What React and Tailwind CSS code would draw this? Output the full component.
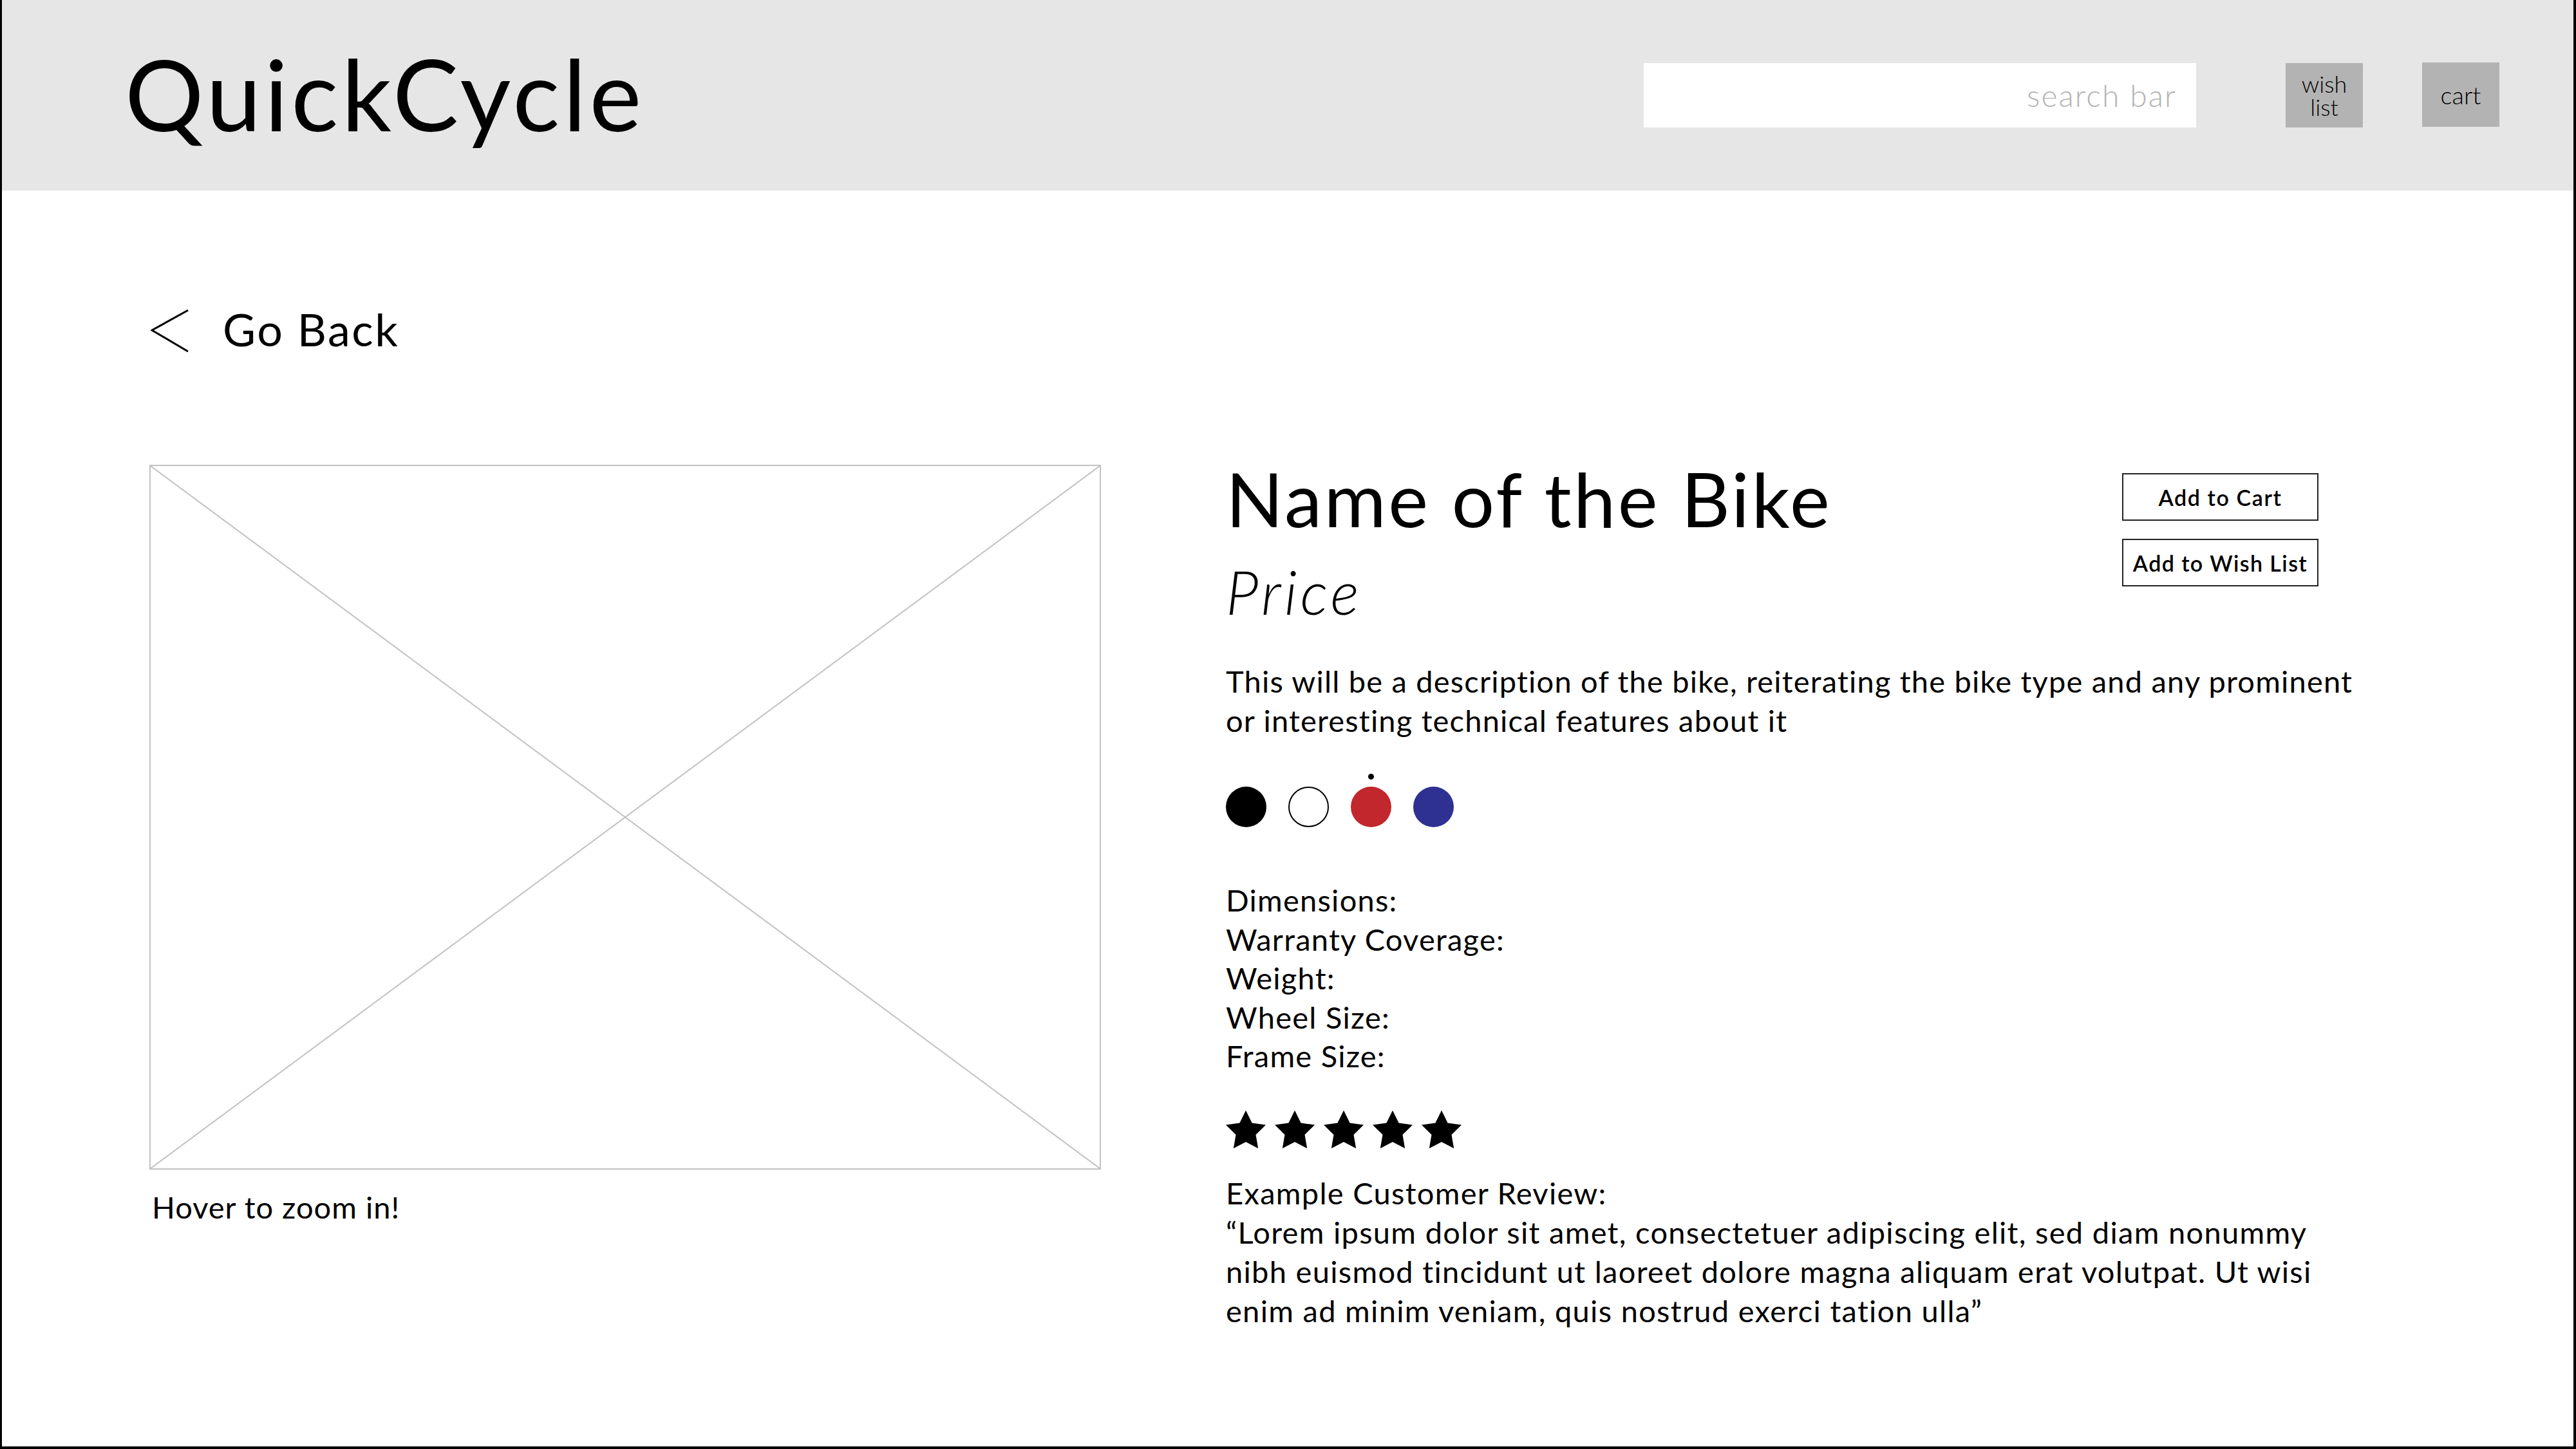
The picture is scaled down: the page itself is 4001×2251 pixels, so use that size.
import React from "react";

function Star() {
  return (
    <svg width="62" height="59" viewBox="2 2 20 19.02" className="block">
      <polygon
        points="12,2 15.09,8.26 22,9.27 17,14.14 18.18,21.02 12,17.77 5.82,21.02 7,14.14 2,9.27 8.91,8.26"
        fill="#000"
      />
    </svg>
  );
}

export default function App() {
  return (
    <div className="w-[4001px] h-[2251px] bg-white border-l-[3px] border-r-[4px] border-b-[4px] border-black flex flex-col font-['Lato',sans-serif] text-black overflow-hidden">
      {/* Header */}
      <header className="h-[296px] shrink-0 bg-[#e6e6e6] flex items-start justify-between pl-[191px] pr-[115px]">
        <div className="mt-[69px] text-[153px] leading-none font-normal tracking-[5px]">QuickCycle</div>
        <div className="mt-[97px] flex items-start">
          <div className="mt-[1px] w-[858px] h-[100px] bg-white flex items-center justify-end pr-[30px] text-[48px] font-light tracking-[2px] text-[#b3b3b3]">
            search bar
          </div>
          <div className="mt-[1px] ml-[139px] w-[120px] h-[100px] bg-[#b3b3b3] flex flex-col items-center justify-center text-[36px] leading-[36px] font-light">
            <span>wish</span>
            <span>list</span>
          </div>
          <div className="ml-[92px] w-[120px] h-[100px] bg-[#b3b3b3] flex items-center justify-center text-[38px] leading-none font-light">
            cart
          </div>
        </div>
      </header>

      {/* Main */}
      <main className="flex-1 pl-[229px] pt-[180px]">
        <div className="flex items-center h-[70px]">
          <svg width="60" height="66" viewBox="0 0 60 66" className="ml-[2px] mt-[6px]">
            <polyline points="58,1 2,32 58,65" fill="none" stroke="#000" strokeWidth="3" />
          </svg>
          <span className="ml-[52px] text-[70px] leading-none tracking-[2.5px]">Go Back</span>
        </div>

        <div className="mt-[170px] flex items-start">
          {/* Left column */}
          <div className="w-[1478px] shrink-0">
            <div className="mt-[6px] h-[1095px] border-2 border-[#c2c2c2]">
              <svg className="w-full h-full block" viewBox="0 0 100 100" preserveAspectRatio="none">
                <line x1="0" y1="0" x2="100" y2="100" stroke="#c2c2c2" strokeWidth="2" vectorEffect="non-scaling-stroke" />
                <line x1="100" y1="0" x2="0" y2="100" stroke="#c2c2c2" strokeWidth="2" vectorEffect="non-scaling-stroke" />
              </svg>
            </div>
            <div className="mt-[35px] ml-[4px] text-[47px] leading-none tracking-[1px]">Hover to zoom in!</div>
          </div>

          {/* Right column */}
          <div className="ml-[194px] w-[1800px] shrink-0">
            <div className="w-[1697px] flex justify-between items-start">
              <div>
                <h1 className="text-[117px] leading-none font-normal tracking-[3.4px]">Name of the Bike</h1>
                <div className="mt-[39px] text-[94px] leading-none italic font-light tracking-[5px]">Price</div>
              </div>
              <div className="mt-[19px] flex flex-col gap-[28px]">
                <button className="w-[305px] h-[74px] border-2 border-[#222] flex items-center justify-center text-[34px] font-semibold tracking-[1.6px] bg-white">
                  Add to Cart
                </button>
                <button className="w-[305px] h-[74px] border-2 border-[#222] flex items-center justify-center text-[34px] font-semibold tracking-[1.4px] bg-white">
                  Add to Wish List
                </button>
              </div>
            </div>

            <p className="mt-[62px] text-[47px] leading-[61px] tracking-[1.2px]">
              This will be a description of the bike, reiterating the bike type and any prominent
              <br />
              or interesting technical features about it
            </p>

            <div className="mt-[72px] flex gap-[34px]">
              <div className="w-[63px] h-[63px] rounded-full bg-black" />
              <div className="w-[63px] h-[63px] rounded-full bg-white border-2 border-black" />
              <div className="relative w-[63px] h-[63px] rounded-full bg-[#c1272d]">
                <div className="absolute left-[27px] top-[-20px] w-[9px] h-[9px] rounded-full bg-black" />
              </div>
              <div className="w-[63px] h-[63px] rounded-full bg-[#2e3192]" />
            </div>

            <div className="mt-[83px] text-[47px] leading-[60.5px] tracking-[1.25px]">
              <div>Dimensions:</div>
              <div>Warranty Coverage:</div>
              <div>Weight:</div>
              <div>Wheel Size:</div>
              <div>Frame Size:</div>
            </div>

            <div className="mt-[54px] flex gap-[14px]">
              <Star />
              <Star />
              <Star />
              <Star />
              <Star />
            </div>

            <div className="mt-[39px] text-[47px] leading-[61px] tracking-[1.3px]">
              <div>Example Customer Review:</div>
              <div>
                “Lorem ipsum dolor sit amet, consectetuer adipiscing elit, sed diam nonummy
                <br />
                nibh euismod tincidunt ut laoreet dolore magna aliquam erat volutpat. Ut wisi
                <br />
                enim ad minim veniam, quis nostrud exerci tation ulla”
              </div>
            </div>
          </div>
        </div>
      </main>
    </div>
  );
}
